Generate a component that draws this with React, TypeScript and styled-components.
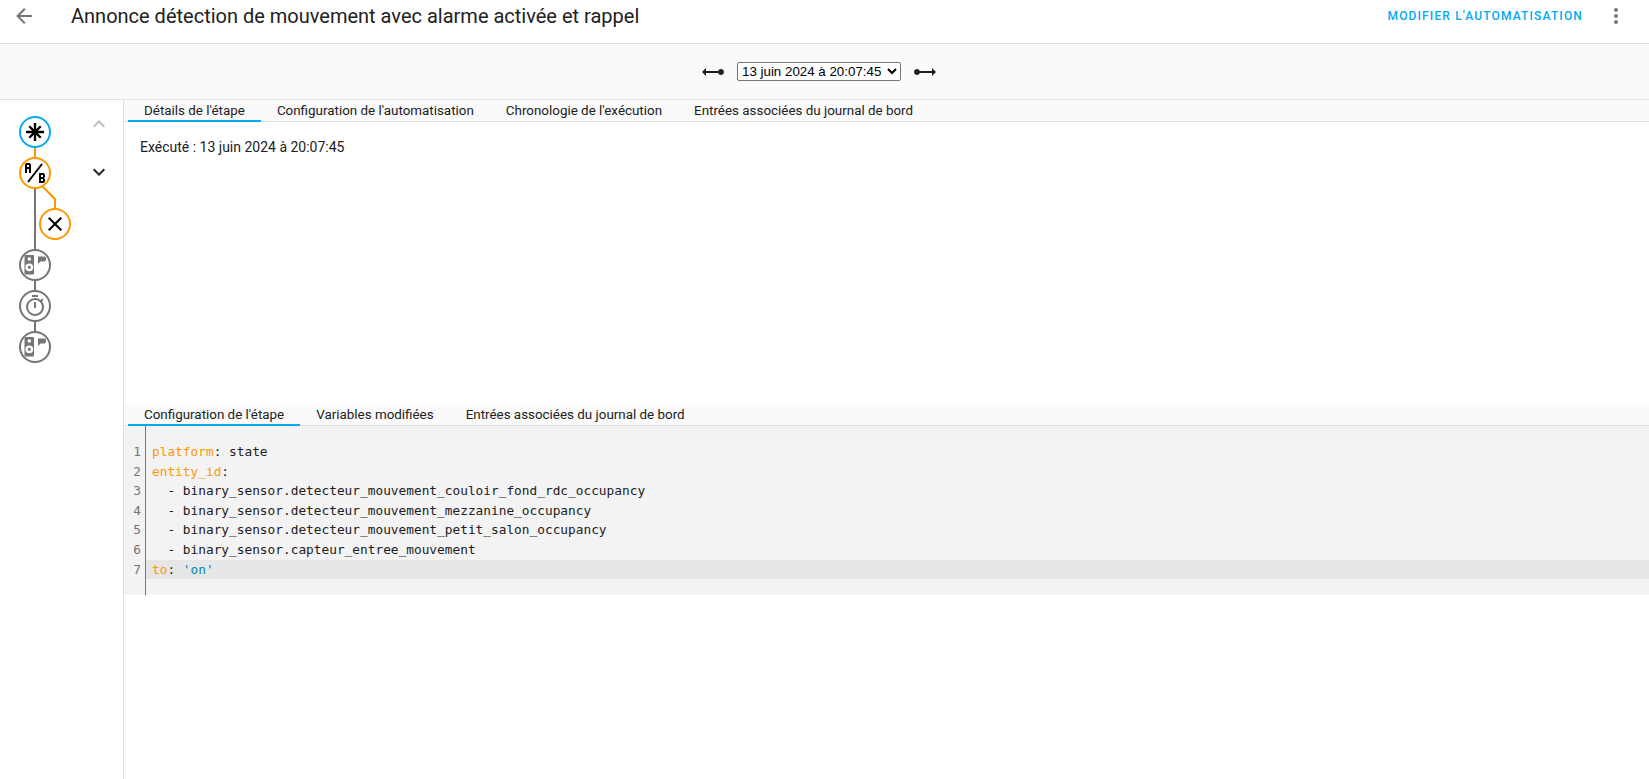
import React from "react";
import styled, { createGlobalStyle } from "styled-components";

const Global = createGlobalStyle`
  html, body { margin: 0; padding: 0; height: 100%; background: #fff; }
  body { font-family: Roboto, "Liberation Sans", sans-serif; color: #212121; overflow: hidden; }
`;

const Page = styled.div`
  width: 1649px;
  height: 779px;
  display: flex;
  flex-direction: column;
  background: #fff;
`;

const Header = styled.header`
  height: 32px;
  flex: none;
  display: flex;
  align-items: center;
  padding: 0 21px 11px 12px;
  border-bottom: 1px solid #e0e0e0;
  box-sizing: content-box;
`;

const IconButton = styled.div`
  width: 24px;
  height: 24px;
  display: flex;
  color: #757575;
`;

const Title = styled.h1`
  margin: 0 0 0 35px;
  flex: 1;
  font-size: 20px;
  font-weight: 400;
  line-height: 32px;
  color: #212121;
`;

const EditLink = styled.a`
  font-size: 12px;
  font-weight: 500;
  letter-spacing: 1.15px;
  color: #03a9f4;
  margin-right: 21px;
`;

const RunBar = styled.div`
  height: 55px;
  flex: none;
  background: #fafafa;
  border-bottom: 1px solid #e0e0e0;
  display: flex;
  align-items: center;
  justify-content: center;
  gap: 12px;
  padding-right: 11px;
  color: #212121;
`;

const RunSelect = styled.select`
  width: 164px;
  height: 19px;
  font-family: "Liberation Sans", Arial, sans-serif;
  font-size: 13.33px;
  background: #fff;
  color: #000;
  border: 1px solid #767676;
  border-radius: 2px;
  padding: 0;
`;

const Body = styled.div`
  flex: 1;
  display: flex;
  min-height: 0;
`;

const Sidebar = styled.aside`
  width: 123px;
  flex: none;
  border-right: 1px solid #e0e0e0;
  display: flex;
`;

const Graph = styled.svg`
  width: 87px;
  height: 300px;
  flex: none;
`;

const Chevrons = styled.div`
  display: flex;
  flex-direction: column;
  padding-top: 12px;
  gap: 24px;
`;

const Chevron = styled.div<{ $off?: boolean }>`
  width: 24px;
  height: 24px;
  color: ${(p) => (p.$off ? "#bdbdbd" : "#212121")};
`;

const Main = styled.main`
  flex: 1;
  min-width: 0;
  display: flex;
  flex-direction: column;
`;

const Tabs = styled.div`
  height: 21px;
  flex: none;
  background: #fafafa;
  border-bottom: 1px solid #e0e0e0;
  display: flex;
  padding-left: 4px;
`;

const Tab = styled.div<{ $active?: boolean }>`
  padding: 0 16px;
  height: 22px;
  box-sizing: border-box;
  font-size: 13.4px;
  line-height: 21px;
  color: #212121;
  white-space: nowrap;
  border-bottom: 2px solid ${(p) => (p.$active ? "#03a9f4" : "transparent")};
`;

const Details = styled.div`
  height: 282px;
  flex: none;
  padding: 15px 16px 0;
  box-sizing: border-box;
  font-size: 14px;
  line-height: 20px;
  color: #212121;
`;

const Code = styled.div`
  height: 169px;
  flex: none;
  background: #f3f3f3;
  display: flex;
  padding: 0;
  font-family: "DejaVu Sans Mono", monospace;
  font-size: 12.8px;
`;

const Gutter = styled.div`
  width: 22px;
  flex: none;
  box-sizing: border-box;
  border-right: 1px solid #767676;
  padding-top: 16px;
  text-align: right;
  padding-right: 4px;
  color: #757575;
`;

const GutterLine = styled.div`
  height: 19.6px;
  line-height: 19.6px;
`;

const Lines = styled.div`
  flex: 1;
  padding-top: 16px;
`;

const Line = styled.div<{ $active?: boolean }>`
  height: 19.6px;
  line-height: 19.6px;
  padding-left: 6px;
  white-space: pre;
  color: #212121;
  background: ${(p) => (p.$active ? "#e6e6e6" : "transparent")};
`;

const Key = styled.span`
  color: #ff9800;
`;

const Str = styled.span`
  color: #0288a8;
`;

const P = {
  left: "M20,11V13H8L13.5,18.5L12.08,19.92L4.16,12L12.08,4.08L13.5,5.5L8,11H20Z",
  dots: "M12,16A2,2 0 0,1 14,18A2,2 0 0,1 12,20A2,2 0 0,1 10,18A2,2 0 0,1 12,16M12,10A2,2 0 0,1 14,12A2,2 0 0,1 12,14A2,2 0 0,1 10,12A2,2 0 0,1 12,10M12,4A2,2 0 0,1 14,6A2,2 0 0,1 12,8A2,2 0 0,1 10,6A2,2 0 0,1 12,4Z",
  up: "M7.41,15.41L12,10.83L16.59,15.41L18,14L12,8L6,14L7.41,15.41Z",
  down: "M7.41,8.58L12,13.17L16.59,8.58L18,10L12,16L6,10L7.41,8.58Z",
  asterisk: "M10.8 3H13.2V21H10.8ZM3 10.8H21V13.2H3ZM5.4 7.1L7.1 5.4L18.6 16.9L16.9 18.6ZM16.9 5.4L18.6 7.1L7.1 18.6L5.4 16.9Z",
  ab: "M4 2A2 2 0 0 0 2 4V12H4V8H6V12H8V4A2 2 0 0 0 6 2H4M4 4H6V6H4M22 15.5V14A2 2 0 0 0 20 12H16V22H20A2 2 0 0 0 22 20V18.5A1.54 1.54 0 0 0 20.5 17A1.54 1.54 0 0 0 22 15.5M20 20H18V18H20V20M20 16H18V14H20M5.79 21.61L4.21 20.39L18.21 2.39L19.79 3.61Z",
  close: "M19,6.41L17.59,5L12,10.59L6.41,5L5,6.41L10.59,12L5,17.59L6.41,19L12,13.41L17.59,19L19,17.59L13.41,12L19,6.41Z",
  timer: "M12,20A7,7 0 0,1 5,13A7,7 0 0,1 12,6A7,7 0 0,1 19,13A7,7 0 0,1 12,20M19.03,7.39L20.45,5.97C20,5.46 19.55,5 19.04,4.56L17.62,6C16.07,4.74 14.12,4 12,4A9,9 0 0,0 3,13A9,9 0 0,0 12,22C17,22 21,17.97 21,13C21,10.88 20.26,8.93 19.03,7.39M11,14H13V8H11M15,1H9V3H15V1Z",
  speaker: "M2.5 2H10A1 1 0 0 1 11 3V20.5A1 1 0 0 1 10 21.5H2.5A1 1 0 0 1 1.5 20.5V3A1 1 0 0 1 2.5 2ZM6.3 4.2A1.8 1.8 0 1 0 6.3 7.8A1.8 1.8 0 1 0 6.3 4.2ZM6.3 10.4A3.9 3.9 0 1 0 6.3 18.2A3.9 3.9 0 1 0 6.3 10.4ZM6.3 12.7A1.6 1.6 0 1 1 6.3 15.9A1.6 1.6 0 1 1 6.3 12.7ZM15 3.5H21.5A1.5 1.5 0 0 1 23 5V6.5A2 2 0 0 1 21 8.5H17.5L15 11Z",
  rayStart: "M1 12L5 16V13H17.17C17.58 14.17 18.7 15 20 15C21.66 15 23 13.66 23 12S21.66 9 20 9C18.7 9 17.58 9.83 17.17 11H5V8L1 12Z",
  rayEnd: "M23 12L19 8V11H6.83C6.42 9.83 5.3 9 4 9C2.34 9 1 10.34 1 12S2.34 15 4 15C5.3 15 6.42 14.17 6.83 13H19V16L23 12Z",
};

const Mdi = ({ d, size = 24 }: { d: string; size?: number }) => (
  <svg width={size} height={size} viewBox="0 0 24 24" fill="currentColor">
    <path d={d} />
  </svg>
);

const Node = ({ x, y, color, d, scale = 1 }: { x: number; y: number; color: string; d: string; scale?: number }) => (
  <g>
    <circle cx={x} cy={y} r={15} fill="#fff" stroke={color} strokeWidth={2} />
    <g transform={`translate(${x - 12 * scale} ${y - 12 * scale}) scale(${scale})`}>
      <path d={d} fill={color === "#757575" ? "#757575" : "#000"} />
    </g>
  </g>
);

const yaml: React.ReactNode[] = [
  <><Key>platform</Key>: state</>,
  <><Key>entity_id</Key>:</>,
  "  - binary_sensor.detecteur_mouvement_couloir_fond_rdc_occupancy",
  "  - binary_sensor.detecteur_mouvement_mezzanine_occupancy",
  "  - binary_sensor.detecteur_mouvement_petit_salon_occupancy",
  "  - binary_sensor.capteur_entree_mouvement",
  <><Key>to</Key>: <Str>'on'</Str></>,
];

export default function App() {
  return (
    <Page>
      <Global />
      <Header>
        <IconButton><Mdi d={P.left} /></IconButton>
        <Title>Annonce détection de mouvement avec alarme activée et rappel</Title>
        <EditLink>MODIFIER L'AUTOMATISATION</EditLink>
        <IconButton><Mdi d={P.dots} /></IconButton>
      </Header>
      <RunBar>
        <Mdi d={P.rayStart} />
        <RunSelect defaultValue="a">
          <option value="a">13 juin 2024 à 20:07:45</option>
        </RunSelect>
        <Mdi d={P.rayEnd} />
      </RunBar>
      <Body>
        <Sidebar>
          <Graph viewBox="0 0 87 300">
            <path d="M35 32V73" stroke="#ff9800" strokeWidth={2} fill="none" />
            <path d="M35 73V250" stroke="#757575" strokeWidth={2} fill="none" />
            <path d="M35 73V79L55 99V124" stroke="#ff9800" strokeWidth={2} fill="none" />
            <Node x={35} y={32} color="#03a9f4" d={P.asterisk} />
            <Node x={35} y={73} color="#ff9800" d={P.ab} />
            <Node x={55} y={124} color="#ff9800" d={P.close} />
            <Node x={35} y={165} color="#757575" d={P.speaker} />
            <Node x={35} y={206} color="#757575" d={P.timer} />
            <Node x={35} y={247} color="#757575" d={P.speaker} />
          </Graph>
          <Chevrons>
            <Chevron $off><Mdi d={P.up} /></Chevron>
            <Chevron><Mdi d={P.down} /></Chevron>
          </Chevrons>
        </Sidebar>
        <Main>
          <Tabs>
            <Tab $active>Détails de l'étape</Tab>
            <Tab>Configuration de l'automatisation</Tab>
            <Tab>Chronologie de l'exécution</Tab>
            <Tab>Entrées associées du journal de bord</Tab>
          </Tabs>
          <Details>Exécuté : 13 juin 2024 à 20:07:45</Details>
          <Tabs>
            <Tab $active>Configuration de l'étape</Tab>
            <Tab>Variables modifiées</Tab>
            <Tab>Entrées associées du journal de bord</Tab>
          </Tabs>
          <Code>
            <Gutter>
              {yaml.map((_, i) => (
                <GutterLine key={i}>{i + 1}</GutterLine>
              ))}
            </Gutter>
            <Lines>
              {yaml.map((l, i) => (
                <Line key={i} $active={i === 6}>{l}</Line>
              ))}
            </Lines>
          </Code>
        </Main>
      </Body>
    </Page>
  );
}
